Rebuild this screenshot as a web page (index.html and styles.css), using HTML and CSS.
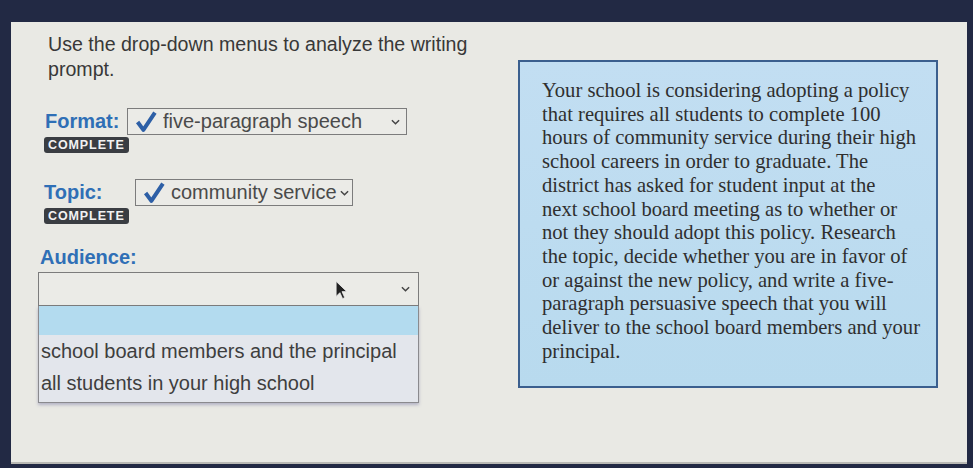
FILE: index.html
```html
<!DOCTYPE html>
<html lang="en">
<head>
    <meta charset="UTF-8">
    <title>Analyze the Prompt</title>
    <link rel="stylesheet" href="styles.css">
</head>
<body>
    <div class="screen">
        <div class="questions">
            <p class="intro">Use the drop-down menus to analyze the writing prompt.</p>

            <div class="field field-format">
                <span class="label">Format:</span>
                <div class="select select-format">
                    <svg class="check" viewBox="0 0 20 20"><path d="M2 10.5 L7.5 18 L18.5 1.5" fill="none" stroke="#2d5fa6" stroke-width="3.8" stroke-linejoin="round"/></svg>
                    <span class="value">five-paragraph speech</span>
                    <svg class="chevron" viewBox="0 0 10 6"><path d="M1 1 L5 5 L9 1" fill="none" stroke="#444" stroke-width="1.6"/></svg>
                </div>
            </div>
            <span class="badge">COMPLETE</span>

            <div class="field field-topic">
                <span class="label">Topic:</span>
                <div class="select select-topic">
                    <svg class="check" viewBox="0 0 20 20"><path d="M2 10.5 L7.5 18 L18.5 1.5" fill="none" stroke="#2d5fa6" stroke-width="3.8" stroke-linejoin="round"/></svg>
                    <span class="value">community service</span>
                    <svg class="chevron" viewBox="0 0 10 6"><path d="M1 1 L5 5 L9 1" fill="none" stroke="#444" stroke-width="1.6"/></svg>
                </div>
            </div>
            <span class="badge">COMPLETE</span>

            <div class="audience">
                <span class="label">Audience:</span>
                <div class="dropdown">
                    <div class="select select-open">
                        <span class="value"></span>
                        <svg class="chevron" viewBox="0 0 10 6"><path d="M1 1 L5 5 L9 1" fill="none" stroke="#444" stroke-width="1.6"/></svg>
                    </div>
                    <ul class="options">
                        <li class="option highlighted"></li>
                        <li class="option">school board members and the principal</li>
                        <li class="option">all students in your high school</li>
                    </ul>
                    <svg class="cursor" viewBox="0 0 12 18"><path d="M1 1 L1 15 L4.5 11.5 L7 17 L9 16 L6.5 10.5 L11 10.5 Z" fill="#222" stroke="#eee" stroke-width="0.8"/></svg>
                </div>
            </div>
        </div>

        <div class="prompt">
            <p>Your school is considering adopting a policy<br>
            that requires all students to complete 100<br>
            hours of community service during their high<br>
            school careers in order to graduate. The<br>
            district has asked for student input at the<br>
            next school board meeting as to whether or<br>
            not they should adopt this policy. Research<br>
            the topic, decide whether you are in favor of<br>
            or against the new policy, and write a five-<br>
            paragraph persuasive speech that you will<br>
            deliver to the school board members and your<br>
            principal.</p>
        </div>
    </div>
</body>
</html>
```

FILE: styles.css
```css
body {
    margin: 0;
    background: #222944;
    font-family: "Liberation Sans", Arial, sans-serif;
    overflow: hidden;
}
.screen {
    margin: 22px 6px 0 11px;
    height: 440px;
    background: #e9e9e4;
    border-bottom: 2px solid #b9b9b5;
    display: flex;
    align-items: flex-start;
}
.questions {
    width: 470px;
    padding: 10px 0 0 33px;
    box-sizing: border-box;
}
.intro {
    margin: 0 0 26px 4px;
    font-size: 19.6px;
    line-height: 25px;
    color: #383838;
}
.label {
    font-size: 20px;
    font-weight: bold;
    color: #2f6fb6;
}
.field {
    display: flex;
    align-items: center;
}
.field-format .label {
    width: 82px;
    padding-left: 1px;
}
.field-topic {
    margin-top: 26px;
}
.field-topic .label {
    width: 91px;
}
.select {
    display: flex;
    align-items: center;
    height: 27px;
    border: 1.5px solid #7c7c7c;
    background: #ebebe7;
    box-sizing: border-box;
    padding: 0 6px 0 7px;
}
.select-format {
    width: 280px;
}
.select-topic {
    width: 218px;
    padding-right: 3px;
}
.check {
    width: 22px;
    height: 21px;
    margin-right: 6px;
}
.value {
    flex: 1;
    font-size: 20px;
    color: #4a4a4a;
    white-space: nowrap;
    overflow: hidden;
}
.select-topic .value {
    overflow: visible;
}
.chevron {
    width: 9px;
    height: 6px;
    margin-left: 1px;
}
.badge {
    display: inline-block;
    margin-top: 0;
    padding: 1px 4px;
    background: #3a3d42;
    color: #f2f2f2;
    font-size: 12.5px;
    font-weight: bold;
    letter-spacing: 0.9px;
    border-radius: 3px;
    line-height: 14px;
}
.audience {
    margin-top: 22px;
}
.audience .label {
    display: block;
    margin-left: -4px;
    margin-bottom: 3px;
}
.dropdown {
    position: relative;
    width: 381px;
    margin-left: -6px;
}
.select-open {
    width: 100%;
    height: 34px;
    padding-right: 8px;
}
.options {
    list-style: none;
    margin: 0;
    padding: 0 0 3px;
    background: #e3e6ec;
    border: 1.5px solid #8a8a8e;
    border-top: none;
    box-shadow: 0 2px 3px rgba(80, 80, 140, 0.35);
}
.option {
    height: 32px;
    line-height: 32px;
    padding-left: 2px;
    font-size: 20px;
    color: #3e3e3e;
}
.option.highlighted {
    height: 29px;
    background: #b3dbef;
}
.cursor {
    position: absolute;
    left: 297px;
    top: 8px;
    width: 13px;
    height: 20px;
}
.prompt {
    margin: 38px 0 0 37px;
    width: 420px;
    height: 328px;
    box-sizing: border-box;
    padding: 17px 6px 0 22px;
    background: linear-gradient(180deg, #c2def2 0%, #b8daee 100%);
    border: 2px solid #3b5f8e;
}
.prompt p {
    margin: 0;
    font-family: "Liberation Serif", "Times New Roman", serif;
    font-size: 20.6px;
    line-height: 23.7px;
    color: #2f2f2f;
    white-space: nowrap;
}
```
